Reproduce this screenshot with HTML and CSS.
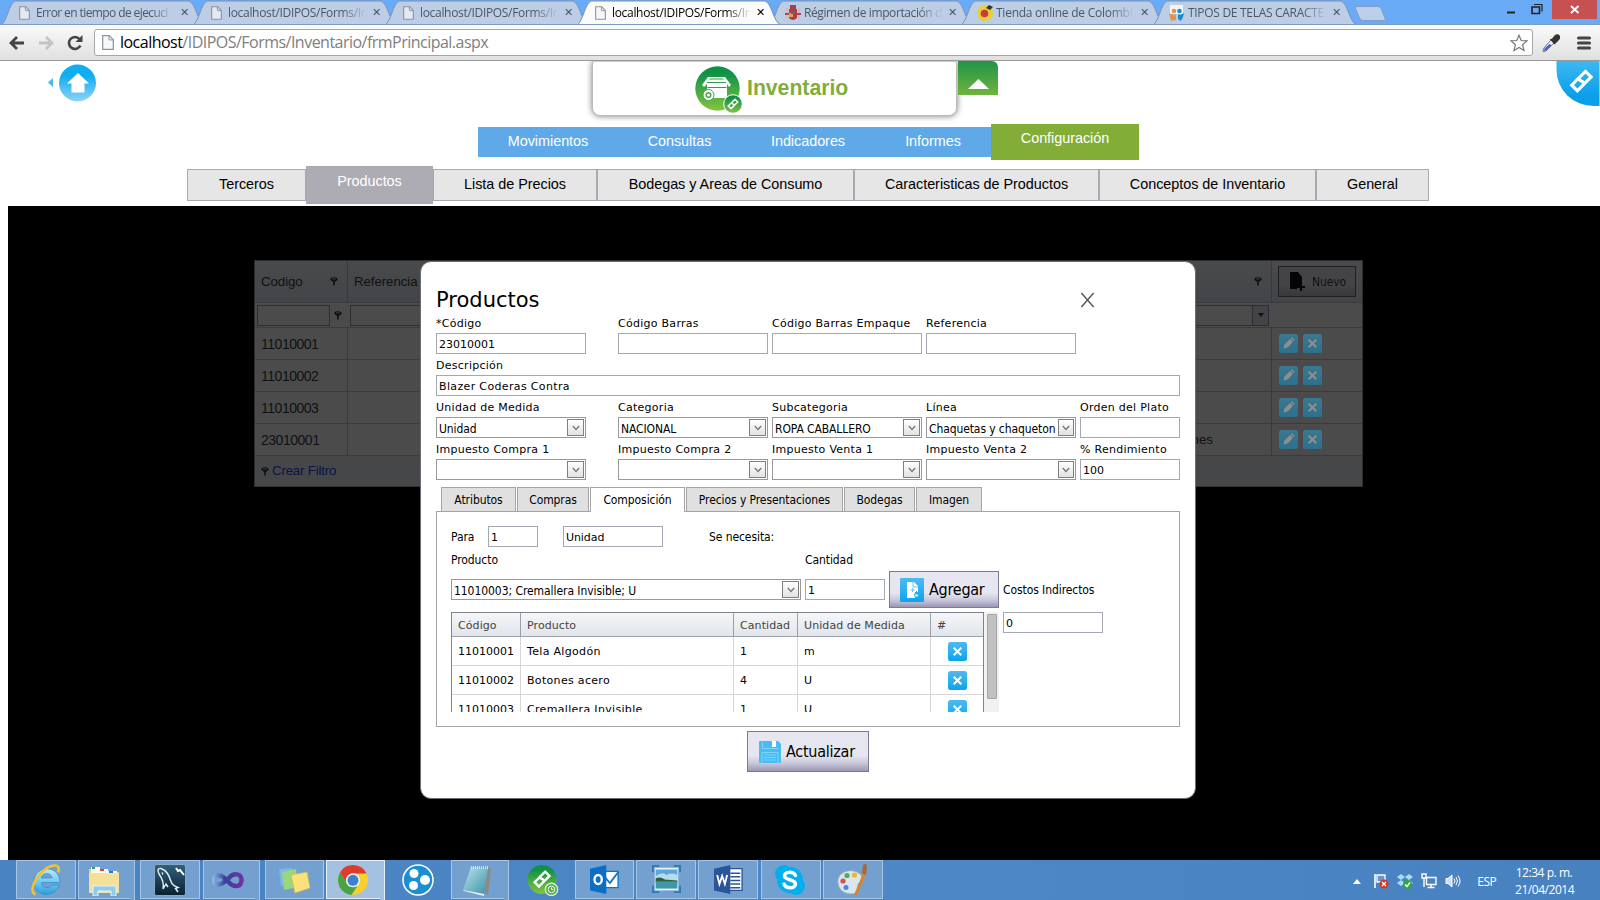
FILE: index.html
```html
<!DOCTYPE html>
<html lang="es">
<head>
<meta charset="utf-8">
<title>Inventario</title>
<link rel="stylesheet" href="styles.css">
</head>
<body>
<svg class="defs" width="0" height="0">
  <defs>
    <linearGradient id="gBlue" x1="0" y1="0" x2="0" y2="1"><stop offset="0" stop-color="#4db9f2"/><stop offset=".5" stop-color="#2fb0f0"/><stop offset="1" stop-color="#0aa3ec"/></linearGradient>
    <linearGradient id="gHome" x1="0" y1="0" x2="0" y2="1"><stop offset=".3" stop-color="#10adf0"/><stop offset="1" stop-color="#8ed3f5"/></linearGradient>
    <linearGradient id="gGreen" x1="0" y1="0" x2="0" y2="1"><stop offset=".15" stop-color="#0e9246"/><stop offset="1" stop-color="#84c440"/></linearGradient>
    <linearGradient id="gCorner" x1="0" y1="0" x2="0" y2="1"><stop offset="0" stop-color="#3cb8f2"/><stop offset=".8" stop-color="#0a9fe9"/></linearGradient>
    <linearGradient id="gMysql" x1="0" y1="0" x2="0" y2="1"><stop offset="0" stop-color="#31617f"/><stop offset="1" stop-color="#0a2033"/></linearGradient>
    <linearGradient id="gPad" x1="0" y1="0" x2="1" y2="1"><stop offset="0" stop-color="#b9e3ea"/><stop offset="1" stop-color="#3d93a8"/></linearGradient>
    <linearGradient id="gVs" x1="0" y1="0" x2="1" y2="0"><stop offset="0" stop-color="#7fb4dc"/><stop offset=".4" stop-color="#3b3f9d"/><stop offset="1" stop-color="#6a35a0"/></linearGradient>
    <linearGradient id="gIe" x1="0" y1="0" x2="0" y2="1"><stop offset="0" stop-color="#bdeafc"/><stop offset=".5" stop-color="#6dcbf3"/><stop offset="1" stop-color="#2a9ede"/></linearGradient>
    <symbol id="page" viewBox="0 0 12 15"><path d="M.7.7h6.6l4 4v9.6H.7z" fill="#f3f5f8" fill-opacity=".7" stroke="#8d949e" stroke-width="1.2"/><path d="M7 .8v4.1h4.2" fill="none" stroke="#8d949e"/></symbol>
    <symbol id="pin" viewBox="0 0 8 9"><ellipse cx="4" cy="2.200" rx="3.600" ry="2" fill="#111113"/><path d="M1.500 3.300h5L4.800 5.300v3.200H3.200V5.300z" fill="#111113"/><path d="M2 1.900h4" stroke="#555" stroke-width=".7"/></symbol>
    <symbol id="del" viewBox="0 0 19 19"><rect width="19" height="19" rx="2.500" fill="url(#gBlue)"/><path d="M5.700 5.700l7.600 7.600M13.300 5.700l-7.600 7.600" stroke="#fff" stroke-width="2"/></symbol>
    <symbol id="edit" viewBox="0 0 19 19"><rect width="19" height="19" rx="2.500" fill="url(#gBlue)"/><path d="M4.500 14.500l1-4 5.500-5.500 3 3-5.500 5.500zM11.800 4.200l1-1 3 3-1 1z" fill="#fff"/></symbol>
    <symbol id="link" viewBox="0 0 24 24"><path d="M9.500 9L16 2.500 21.500 8 15 14.500 12 11.500M14.500 15L8 21.500 2.500 16 9 9.500l3 3" fill="none" stroke="#fff" stroke-width="3.100"/></symbol>
    <symbol id="chev" viewBox="0 0 8 6"><path d="M.8 1L4 4.500 7.200 1" fill="none" stroke="#777" stroke-width="1.300"/></symbol>
  </defs>
</svg>

<header class="browser">
  <div class="strip">
    <div class="tab"><svg class="tabshape" viewBox="0 0 204 25"><path d="M0 25C6 22 8 3 14 1H188C195 3 196 22 204 25"/></svg><svg class="fav"><use href="#page"/></svg><span class="fade t1">Error en tiempo de ejecuci</span><i class="x">✕</i></div>
    <div class="tab"><svg class="tabshape" viewBox="0 0 204 25"><path d="M0 25C6 22 8 3 14 1H188C195 3 196 22 204 25"/></svg><svg class="fav"><use href="#page"/></svg><span class="fade t2">localhost/IDIPOS/Forms/In</span><i class="x">✕</i></div>
    <div class="tab"><svg class="tabshape" viewBox="0 0 204 25"><path d="M0 25C6 22 8 3 14 1H188C195 3 196 22 204 25"/></svg><svg class="fav"><use href="#page"/></svg><span class="fade t2">localhost/IDIPOS/Forms/In</span><i class="x">✕</i></div>
    <div class="tab active"><svg class="tabshape" viewBox="0 0 204 25"><path d="M0 25C6 22 8 3 14 1H188C195 3 196 22 204 25"/></svg><svg class="fav"><use href="#page"/></svg><span class="fade t2">localhost/IDIPOS/Forms/In</span><i class="x">✕</i></div>
    <div class="tab"><svg class="tabshape" viewBox="0 0 204 25"><path d="M0 25C6 22 8 3 14 1H188C195 3 196 22 204 25"/></svg><svg class="fav wide" viewBox="0 0 16 16"><path d="M1 3h2v11H1zM13 3h2v11h-2z" fill="#d5b9bd"/><path d="M4 4h8v9q-4 4-8 0z" fill="#b43a44"/><path d="M4 8h4v4H4z" fill="#d8a94a"/><path d="M5 0h6v4H5z" fill="#a5404a"/><path d="M0 8h4v2H0zM12 8h4v2h-4z" fill="#b8404f"/><path d="M6 6h4v3H6z" fill="#6b5a8a"/></svg><span class="fade t5">Régimen de importación d</span><i class="x">✕</i></div>
    <div class="tab"><svg class="tabshape" viewBox="0 0 204 25"><path d="M0 25C6 22 8 3 14 1H188C195 3 196 22 204 25"/></svg><svg class="fav wide" viewBox="0 0 16 16"><circle cx="8" cy="8" r="8" fill="#e2d234"/><circle cx="7.500" cy="8.500" r="3.800" fill="#d33744"/><path d="M9 3l3-3 4 2-3 3z" fill="#333"/></svg><span class="fade t6">Tienda online de Colombi</span><i class="x">✕</i></div>
    <div class="tab"><svg class="tabshape" viewBox="0 0 204 25"><path d="M0 25C6 22 8 3 14 1H188C195 3 196 22 204 25"/></svg><svg class="fav wide" viewBox="0 0 16 16"><path d="M1 0h13v9H1z" fill="#f2f5f8"/><circle cx="5" cy="6" r="2.300" fill="#e0954a"/><circle cx="10.500" cy="6" r="2.300" fill="#1c8cc9"/><path d="M0 8l5 2 2-1v6l-5 1-1-4z" fill="#e0954a"/><path d="M15 8l-4 2-2-1v5l3 2 2-4z" fill="#1c8cc9"/></svg><span class="fade t7">TIPOS DE TELAS CARACTE</span><i class="x">✕</i></div>
    <svg class="newtab" viewBox="0 0 31 15"><path d="M.5 2.500Q0 .5 2 .5H23Q25 .5 26 2.500L30 12Q31 14.500 28.500 14.500H8Q5.500 14.500 4.500 12z" fill="#bccfe8" stroke="#7f9cc4"/></svg>
    <div class="wins">
      <svg class="win min" viewBox="0 0 12 12"><path d="M2 9.500h8" stroke="#222" stroke-width="2"/></svg>
      <svg class="win" viewBox="0 0 12 12"><path d="M1 4h7.500v6.500H1z" fill="none" stroke="#222" stroke-width="1.600"/><path d="M3 1.500h8v7" fill="none" stroke="#222" stroke-width="1.200"/></svg>
      <div class="winx"><svg width="10" height="9" viewBox="0 0 10 9"><path d="M1 1l7.500 7M8.500 1L1 8" stroke="#fff" stroke-width="1.800"/></svg></div>
    </div>
  </div>
  <div class="toolbar">
    <svg class="nav" viewBox="0 0 16 16"><path d="M15 8H2.500M8 2L2 8l6 6" fill="none" stroke="#444" stroke-width="2.800"/></svg>
    <svg class="nav" viewBox="0 0 16 16"><path d="M1 8h12.500M8 2l6 6-6 6" fill="none" stroke="#c4c4c4" stroke-width="2.800"/></svg>
    <svg class="nav" viewBox="0 0 16 16"><path d="M13.400 10.500A6 6 0 1 1 12.500 4" fill="none" stroke="#444" stroke-width="2.600"/><path d="M15.500 0v7h-7z" fill="#444"/></svg>
    <div class="url"><svg class="pg"><use href="#page"/></svg><span class="addr"><b>localhost</b>/IDIPOS/Forms/Inventario/frmPrincipal.aspx</span><svg class="star" viewBox="0 0 18 18"><path d="M9 1.200l2.200 5.300 5.800.4-4.400 3.800 1.400 5.800L9 13.500l-5 3 1.400-5.800L1 6.900l5.800-.4z" fill="#fff" stroke="#777" stroke-width="1.200"/></svg></div>
    <svg class="drop" viewBox="0 0 18 18"><path d="M9 6l3 3-8 8-3 .5.500-3z" fill="#eef" stroke="#777"/><path d="M7.500 10l2 1-5.500 5.500-2 .3.300-2z" fill="#3d5bd0"/><path d="M8.500 5l4.500 5M10 6l3-4q2.500-2 4 0t-1 4l-3 3z" fill="#333" stroke="#333" stroke-width="1.500"/></svg>
    <svg class="burger" viewBox="0 0 14 14"><path d="M1.500 2h11M1.500 7h11M1.500 12h11" stroke="#444" stroke-width="3" stroke-linecap="round"/></svg>
  </div>
</header>

<main class="page">
  <div class="top">
    <svg class="home" viewBox="0 0 50 38"><path d="M6 14v9l-5-4.500z" fill="#4bb9ee"/><circle cx="30.500" cy="19" r="18.500" fill="url(#gHome)"/><path d="M31 9l11 10.500h-4.500v9h-13v-9H20z" fill="#fff"/></svg>
    <div class="brand">
      <svg class="brandicon" viewBox="0 0 48 48"><circle cx="22.500" cy="22.500" r="22.200" fill="url(#gGreen)"/><path d="M13 11h17l6 8-2 2-2-3v14H12V18l-3 3-2-2z" fill="#fff"/><path d="M14.500 13h14M12 16.500h19M12.500 21.500h19" stroke="#2d9d47" stroke-width="1.200"/><circle cx="13.500" cy="29" r="5.500" fill="#fff" stroke="#46a845"/><circle cx="13.500" cy="29" r="2.300" fill="none" stroke="#46a845" stroke-width="1.500"/><circle cx="38" cy="38" r="9.300" fill="url(#gGreen)" stroke="#fff"/><use href="#link" x="32" y="32" width="12" height="12"/></svg>
      <span>Inventario</span>
    </div>
    <div class="fold"><svg width="21" height="10" viewBox="0 0 21 10"><path d="M10.500 0L21 10H0z" fill="#fff"/></svg></div>
    <svg class="corner" viewBox="0 0 44 46"><path d="M0 0H44V46H38A38 37 0 0 1 0 9z" fill="url(#gCorner)"/><use href="#link" x="13" y="8" width="25" height="25"/></svg>
  </div>
  <nav class="menu">
    <a class="m1">Movimientos</a><a class="m2">Consultas</a><a class="m3">Indicadores</a><a class="m4">Informes</a><a class="m5 on">Configuración</a>
  </nav>
  <nav class="submenu">
    <a class="s1">Terceros</a><a class="s2 on">Productos</a><a class="s3">Lista de Precios</a><a class="s4">Bodegas y Areas de Consumo</a><a class="s5">Caracteristicas de Productos</a><a class="s6">Conceptos de Inventario</a><a class="s7">General</a>
  </nav>

  <section class="stage">
    <div class="grid">
      <div class="gr head"><div class="c1"><span>Codigo</span><svg class="pin"><use href="#pin"/></svg></div><div class="c2"><span>Referencia</span><svg class="pin far"><use href="#pin"/></svg></div><div class="c3"><div class="nuevo"><svg width="16" height="20" viewBox="0 0 16 20"><path d="M1 0h8l4 5v6h-2v3H8v3H1z" fill="#050505"/><path d="M12 11v8M8 15h8" stroke="#050505" stroke-width="2.200"/></svg>Nuevo</div></div></div>
      <div class="gr filt"><div class="c1"><i class="fi"></i><svg class="pin"><use href="#pin"/></svg></div><div class="c2"><i class="combo"><b></b></i></div><div class="c3"></div></div>
      <div class="gr row"><div class="c1">11010001</div><div class="c2"></div><div class="c3"><svg><use href="#edit"/></svg><svg><use href="#del"/></svg></div></div>
      <div class="gr row"><div class="c1">11010002</div><div class="c2"></div><div class="c3"><svg><use href="#edit"/></svg><svg><use href="#del"/></svg></div></div>
      <div class="gr row"><div class="c1">11010003</div><div class="c2"></div><div class="c3"><svg><use href="#edit"/></svg><svg><use href="#del"/></svg></div></div>
      <div class="gr row"><div class="c1">23010001</div><div class="c2"><span class="nes">nes</span></div><div class="c3"><svg><use href="#edit"/></svg><svg><use href="#del"/></svg></div></div>
      <div class="foot"><svg class="pin"><use href="#pin"/></svg><span>Crear Filtro</span></div>
    </div>

    <div class="modal">
      <div class="mhead"><h1>Productos</h1><svg class="close" viewBox="0 0 16 16"><path d="M1.500.5L14.500 15.500M14.500.5L1.500 15.500" stroke="#555" stroke-width="1.500"/></svg></div>
      <div class="form">
        <label class="a">*Código<span class="in num">23010001</span></label><label class="b">Código Barras<span class="in"></span></label><label class="c">Código Barras Empaque<span class="in"></span></label><label class="d">Referencia<span class="in"></span></label>
        <label class="all">Descripción<span class="in">Blazer Coderas Contra</span></label>
        <label class="a">Unidad de Medida<span class="in sel">Unidad<i><svg><use href="#chev"/></svg></i></span></label><label class="b">Categoria<span class="in sel">NACIONAL<i><svg><use href="#chev"/></svg></i></span></label><label class="c">Subcategoria<span class="in sel">ROPA CABALLERO<i><svg><use href="#chev"/></svg></i></span></label><label class="d">Línea<span class="in sel">Chaquetas y chaqueton<i><svg><use href="#chev"/></svg></i></span></label><label class="e">Orden del Plato<span class="in"></span></label>
        <label class="a">Impuesto Compra 1<span class="in sel"><i><svg><use href="#chev"/></svg></i></span></label><label class="b">Impuesto Compra 2<span class="in sel"><i><svg><use href="#chev"/></svg></i></span></label><label class="c">Impuesto Venta 1<span class="in sel"><i><svg><use href="#chev"/></svg></i></span></label><label class="d">Impuesto Venta 2<span class="in sel"><i><svg><use href="#chev"/></svg></i></span></label><label class="e">% Rendimiento<span class="in num">100</span></label>
      </div>
      <div class="tabs"><a class="p1">Atributos</a><a class="p2">Compras</a><a class="p3 on">Composición</a><a class="p4">Precios y Presentaciones</a><a class="p5">Bodegas</a><a class="p6">Imagen</a></div>
      <div class="panel">
        <div class="line1"><span class="para">Para</span><span class="in w50">1</span><span class="in w100">Unidad</span><span>Se necesita:</span></div>
        <div class="line2"><span class="lp">Producto</span><span>Cantidad</span></div>
        <div class="line3"><span class="in sel w350">11010003; Cremallera Invisible; U<i><svg><use href="#chev"/></svg></i></span><span class="in w80">1</span><button class="btn add"><svg width="24" height="24" viewBox="0 0 24 24"><rect width="24" height="24" rx="1" fill="url(#gBlue)"/><path d="M7 4h7l4 4v6h-3v6H7z" fill="#fff"/><path d="M13 4v5h5M10.500 12h4M12.500 10v4" stroke="#6cc5f2" fill="none"/><path d="M16.500 13v3h2l-.5 3h-3l-.5-3h2" stroke="#27abec" fill="#fff"/></svg>Agregar</button><span>Costos Indirectos</span></div>
        <div class="line4">
          <div class="scroller">
            <div class="table">
              <div class="tr th"><span>Código</span><span>Producto</span><span>Cantidad</span><span>Unidad de Medida</span><span>#</span></div>
              <div class="tr"><span class="num">11010001</span><span>Tela Algodón</span><span>1</span><span>m</span><span class="ic"><svg><use href="#del"/></svg></span></div>
              <div class="tr"><span class="num">11010002</span><span>Botones acero</span><span>4</span><span>U</span><span class="ic"><svg><use href="#del"/></svg></span></div>
              <div class="tr"><span class="num">11010003</span><span>Cremallera Invisible</span><span>1</span><span>U</span><span class="ic"><svg><use href="#del"/></svg></span></div>
            </div>
            <div class="track"><div class="thumb"></div></div>
          </div>
          <span class="in w100">0</span>
        </div>
      </div>
      <button class="btn save"><svg width="22" height="22" viewBox="0 0 22 22"><path d="M0 1q0-1 1-1h18l3 3v18q0 1-1 1H1q-1 0-1-1z" fill="#49bcf3"/><path d="M13 0h4v6h-4z" fill="#fff"/><path d="M3.500 1v6.500H19M3 22V11.500h16V22M5 14h12M5 16.500h12M5 19h12" fill="none" stroke="#7fd2f8"/></svg>Actualizar</button>
    </div>
  </section>
</main>

<footer class="taskbar">
  <div class="tk t-ie box"><svg viewBox="0 0 32 32"><path fill-rule="evenodd" d="M30 18.500H11.500c.5 6 8.500 6.500 10.500 2.500h7.500C24 35 4 33 4 17.500 4 1 30 0 30 18.500zM11.500 14H22c-.5-6-10-6-10.500 0z" fill="url(#gIe)" stroke="#2b86c0" stroke-width=".6"/><path d="M5.500 30.500C-4 27 11 1 25.500 1.500q5 .5 2.500 7" fill="none" stroke="#f3c32c" stroke-width="2.600"/></svg></div>
  <div class="tk t-ex box stack"><svg viewBox="0 0 32 32"><path d="M1 5h10l2 3h18v21H1z" fill="#e8cf7d"/><path d="M3 3h9v6H3zM11 5h9v5h-9zM20 7h9v4h-9z" fill="#fbfbf3"/><path d="M4 3h3v2H4z" fill="#3a4"/><path d="M12 5h4v2h-4z" fill="#d43"/><path d="M21 7h4v2h-4z" fill="#27c"/><path d="M1 9h30v20H1z" fill="#f5e09a"/><path d="M5 32V22h23v10h-5v-5H10v5z" fill="#8fcbec" stroke="#dff3ff"/></svg></div>
  <div class="tk t-my box"><svg viewBox="0 0 32 32"><rect x=".5" y=".5" width="31" height="31" rx="2" fill="url(#gMysql)" stroke="#8aa9c0"/><path d="M9 25c1-5-1-11-4-15C3 6 4 4 7 4.500c6 2 8 7 10 13 1 3 4 5 7 6l-2.500 1L24 28M9 25l3-5 2 3M8 8.500l1 2" fill="none" stroke="#e8f0f6" stroke-width="1.400"/><path d="M22 4l2 3 2-1 4 5" stroke="#fff" fill="none" stroke-width="2"/></svg></div>
  <div class="tk t-vs box stack"><svg viewBox="0 0 32 32"><path d="M15 17C12 12.500 9 11.500 6 11.500a4.500 4.500 0 0 0 0 9c5 0 9-4.500 12-7.500 3-4 11.500-4 11.500 3s-7.500 8.500-14 1" fill="none" stroke="url(#gVs)" stroke-width="4.500"/></svg></div>
  <div class="tk t-st box"><svg viewBox="0 0 32 32"><path d="M1 5l13-1 2 17-13 1z" fill="#77b9e8"/><path d="M4 8l14-3 2 18-14 3z" fill="#9bd67a"/><path d="M13 11l16-3 3 16-15 5q-2-9-4-18z" fill="#f7e27c" stroke="#d6b84c" stroke-width=".7"/></svg></div>
  <div class="tk t-ch box stack lit"><svg viewBox="0 0 32 32"><circle cx="16" cy="16" r="15" fill="#f7cf2e"/><path d="M3 8.500A15 15 0 0 1 29.500 9.500H16A7 7 0 0 0 9.500 19z" fill="#dc3b2f"/><path d="M3 8.500A15 15 0 0 0 14.500 31L22 19.500A7 7 0 0 1 9.500 19z" fill="#46a547"/><circle cx="16" cy="16.300" r="7" fill="#f2f2f2"/><circle cx="16" cy="16.300" r="5.500" fill="#3b80d1"/></svg></div>
  <div class="tk t-ha"><svg viewBox="0 0 32 32"><circle cx="16" cy="16" r="15" fill="#1b8fd2" stroke="#fff" stroke-width="1.500"/><g fill="#fff"><circle cx="12" cy="9.500" r="4.500"/><circle cx="11.500" cy="21.500" r="4.500"/><circle cx="23" cy="16" r="5"/></g></svg></div>
  <div class="tk t-no box stack"><svg viewBox="0 0 32 32"><path d="M10 3l20 1-3 27-3-2z" fill="#8d8a83"/><path d="M10 3l17 1-4 26-21-4z" fill="url(#gPad)"/><path d="M2 26l21 4v2L3 27z" fill="#eee"/><path d="M10 3.500h18" stroke="#ddd" stroke-width="3" stroke-dasharray="1 1"/></svg></div>
  <div class="tk t-li"><svg viewBox="0 0 34 34"><circle cx="16" cy="16.500" r="15.500" fill="url(#gGreen)"/><use href="#link" x="6" y="6" width="20" height="20"/><circle cx="26" cy="27" r="6.500" fill="#4fae45" stroke="#d9f0c8" stroke-width="1.500"/><circle cx="26" cy="27" r="3.500" fill="none" stroke="#fff"/><path d="M26 25v2h2" fill="none" stroke="#fff"/></svg></div>
  <div class="tk t-ou box"><svg viewBox="0 0 32 32"><path d="M14 7h17v18H14z" fill="#fff" stroke="#0f74c8" stroke-width="1.500"/><path d="M16 13l6 7 9-12" fill="none" stroke="#0f74c8" stroke-width="2"/><path d="M0 4l18-4v32L0 28z" fill="#0a6fc5"/><ellipse cx="9" cy="16" rx="4" ry="5" fill="none" stroke="#fff" stroke-width="2.600"/></svg></div>
  <div class="tk t-pi box"><svg viewBox="0 0 32 32"><path d="M3 3h26v25H3z" fill="#eaf1f5"/><path d="M4 5h24v10H4z" fill="#5ba7dc"/><path d="M4 12q8-5 12-1 6-3 12 0v6H4z" fill="#b5dcee"/><path d="M4 15q5-3 10 1l14 1v2H4z" fill="#315d3b"/><path d="M4 18h24v8H4z" fill="#3e98a7"/><path d="M1 8V1h7M24 1h7v7M31 23v7h-7M8 30H1v-7" fill="none" stroke="#2c78bb" stroke-width="2"/></svg></div>
  <div class="tk t-wo box"><svg viewBox="0 0 32 32"><path d="M14 4h17v24H14z" fill="#fff" stroke="#2a5699" stroke-width="1.500"/><path d="M18 9h11M18 13h11M18 17h11M18 21h11M18 25h11" stroke="#2a5699" stroke-width="1.700"/><path d="M0 4l18-4v32L0 28z" fill="#2a5699"/><path d="M3.500 11l2.500 10 3-9 3 9 2.500-10" fill="none" stroke="#fff" stroke-width="2"/></svg></div>
  <div class="tk t-sk box"><svg viewBox="0 0 32 32"><circle cx="10" cy="10" r="9" fill="#00aff0"/><circle cx="22" cy="22" r="9" fill="#00aff0"/><circle cx="16" cy="16" r="13" fill="#00aff0"/><path d="M21.500 11.500C19 7 10.500 7.500 10.500 12s11 3 11 8-9.500 5-11.500 0" fill="none" stroke="#fff" stroke-width="3.500" stroke-linecap="round"/></svg></div>
  <div class="tk t-pa box"><svg viewBox="0 0 32 32"><path d="M2 20C0 9 12 4 21 8c8 4 5 9 2 11s2 7-3 10C13 32 3 28 2 20z" fill="#d7e6ef" stroke="#90abc0"/><circle cx="7" cy="17" r="2.600" fill="#dc5145"/><circle cx="11" cy="11.500" r="2.600" fill="#55b04b"/><circle cx="18.500" cy="11" r="2.600" fill="#f1b52d"/><circle cx="10" cy="23.500" r="2.500" fill="#4d87d6"/><path d="M18 31L27 9l3 1-9 21z" fill="#d9832d"/><path d="M26 9l1-8q4-3 4 2l-1 8z" fill="#a66a3a"/></svg></div>
  <div class="tray">
    <svg width="8" height="5" viewBox="0 0 8 5"><path d="M4 0l4 5H0z" fill="#fff"/></svg>
    <svg width="16" height="16" viewBox="0 0 16 16"><path d="M2 1v14" stroke="#fff" stroke-width="1.600"/><path d="M4 2h8v7H4z" fill="#6b95c4" stroke="#fff" stroke-width="1.300"/><circle cx="11" cy="11" r="4.500" fill="#d6352b"/><path d="M9 9l4 4M13 9l-4 4" stroke="#fff" stroke-width="1.300"/></svg>
    <svg width="16" height="16" viewBox="0 0 16 16"><path d="M4 1l4 3-4 3-4-3zM12 1l4 3-4 3-4-3zM4 7l4 3-4 3-4-3zM12 7l4 3-4 3-4-3z" fill="#a9dbfa"/><circle cx="10.500" cy="11.500" r="4.500" fill="#2fa33c"/><path d="M8 11.500l2 2 3-4" fill="none" stroke="#fff" stroke-width="1.500"/></svg>
    <svg width="16" height="16" viewBox="0 0 16 16"><path d="M5.500 4.500h9.500v7H5.500zM10 12v2.500M6.500 14.500h7M1 1h4v4H1zM3 5v9" fill="none" stroke="#fff" stroke-width="1.400"/></svg>
    <svg width="16" height="16" viewBox="0 0 16 16"><path d="M1 5.500h2L7 2v12l-4-3.500H1z" fill="#cfdded" stroke="#fff"/><path d="M9 5.500q2 2.500 0 5M11 4q3 4 0 8M13 2.500q4 5.500 0 11" fill="none" stroke="#fff"/></svg>
    <span class="esp">ESP</span>
    <span class="clock">12:34 p. m.<br>21/04/2014</span>
  </div>
</footer>
</body>
</html>
```
FILE: styles.css
```css
* { box-sizing: border-box; }
body { margin: 0; width: 1600px; height: 900px; overflow: hidden; background: #fff; font-family: "DejaVu Sans Condensed", "DejaVu Sans", sans-serif; font-size: 12px; color: #000; }
svg { display: block; flex: none; }
i, b { font-style: normal; font-weight: normal; }
.defs { position: absolute; }

/* browser frame */
.strip { display: flex; height: 25px; background: #6aabf7; border-bottom: 1px solid #7d9cc5; font: 12px "Open Sans", "Noto Sans", sans-serif; color: #4d5665; overflow: hidden; padding-left: 1px; }
.tab { position: relative; width: 192px; height: 25px; display: flex; align-items: center; padding-left: 18px; flex: none; }
.tabshape { position: absolute; left: 0; top: 0; width: 204px; height: 25px; }
.tabshape path { fill: #bccee6; stroke: #7b90b0; }
.tab > :not(.tabshape) { position: relative; z-index: 3; }
.active { z-index: 2; color: #000; }
.active .tabshape path { fill: #fbfbfb; }
.fav { width: 11px; height: 14px; margin-right: 6px; }
.fav.wide { width: 16px; height: 16px; margin: 0 3px 0 -2px; }
.fade { width: 139px; white-space: nowrap; overflow: hidden; -webkit-mask-image: linear-gradient(90deg, #000 82%, transparent 100%); mask-image: linear-gradient(90deg, #000 82%, transparent 100%); }
.t1 { letter-spacing: -.6px; }
.t2 { letter-spacing: -.32px; }
.t5 { letter-spacing: -.4px; }
.t6 { letter-spacing: -.25px; }
.t7 { letter-spacing: -.3px; }
.x { font: bold 11px "DejaVu Sans", sans-serif; width: 12px; margin-left: 5px; }
.newtab { width: 31px; height: 15px; margin: 6px 0 0 10px; }
.wins { margin-left: auto; display: flex; height: 19px; }
.win { width: 12px; height: 12px; margin: 3px 9px 0 0; }
.min { margin-right: 14px; }
.winx { background: #c75050; width: 45px; height: 19px; margin-right: 3px; display: flex; align-items: center; justify-content: center; }
.toolbar { height: 36px; background: linear-gradient(#fafafa, #e0e0e0); border-bottom: 1px solid #9a9a9a; display: flex; align-items: center; padding-left: 9px; }
.nav { width: 16px; height: 16px; margin-right: 13px; }
.nav + .nav + .nav { margin-right: 11px; }
.url { width: 1439px; height: 27px; border: 1px solid #a6a6a6; border-radius: 3px; background: #fff; display: flex; align-items: center; padding-left: 7px; }
.pg { width: 12px; height: 15px; }
.addr { font: 16px/24px "Open Sans", sans-serif; color: #808080; margin: -1px 0 0 6px; letter-spacing: -.52px; }
.addr b { color: #000; }
.star { width: 18px; height: 18px; margin-left: auto; margin-right: 4px; }
.drop { width: 18px; height: 18px; margin-left: 9px; }
.burger { width: 14px; height: 14px; margin-left: 17px; }

/* page header */
.page { height: 799px; }
.top { display: flex; height: 63px; align-items: flex-start; overflow: hidden; }
.home { width: 50px; height: 38px; margin: 3px 0 0 47px; }
.brand { width: 365px; height: 55px; margin-left: 495px; border: 1px solid #bbb; border-top-color: #ccc; border-radius: 3px 3px 8px 8px; box-shadow: 0 0 6px #777; background: #fff; display: flex; align-items: center; padding-left: 102px; font: bold 21.200px "Liberation Sans", Arial, sans-serif; color: #82ad3a; }
.brand span { margin-top: -2px; }
.brandicon { width: 48px; height: 48px; margin: 3px 4px 0 0; }
.fold { width: 40px; height: 34px; margin-left: 1px; border-radius: 0 6px 0 0; background: linear-gradient(#209449, #70b33f); display: flex; justify-content: center; align-items: flex-end; padding-bottom: 6px; }
.corner { width: 44px; height: 45px; margin-left: auto; }
.menu, .submenu { display: flex; font: 14.400px "Liberation Sans", Arial, sans-serif; letter-spacing: -.03px; }
.menu a, .submenu a { text-align: center; white-space: nowrap; }
.menu { height: 36px; padding-left: 478px; color: #fff; }
.menu a { margin-top: 3px; height: 30px; line-height: 28px; background: #60a9e9; }
.menu .on { margin-top: 0; height: 36px; background: #82ae38; }
.m1 { width: 140px; } .m2 { width: 123px; } .m3 { width: 134px; } .m4 { width: 116px; } .m5 { width: 148px; }
.submenu { height: 46px; padding: 6px 0 0 187px; }
.submenu a { margin-top: 3px; height: 32px; line-height: 28px; background: #e6e6e6; border: 1px solid #a9a9b2; }
.submenu .on { margin-top: 0; height: 38px; background: #adacb4; color: #fff; }
.s1 { width: 119px; } .s2 { width: 127px; } .s3 { width: 164px; } .s4 { width: 257px; } .s5 { width: 245px; } .s6 { width: 217px; } .s7 { width: 113px; }

/* dimmed grid */
.stage { position: relative; height: 654px; margin-left: 8px; background: #000; padding: 54px 0 0 246px; }
.grid { width: 1109px; border: 1px solid #2e2e30; font: 13.300px "Liberation Sans", Arial, sans-serif; color: #111; background: #4b4b4b; }
.gr { display: flex; border-bottom: 1px solid #3b3b3e; }
.gr > div { display: flex; align-items: center; }
.c1 { width: 93px; border-right: 1px solid #3a3a3e; padding-left: 6px; }
.c2 { width: 924px; border-right: 1px solid #3a3a3e; padding-left: 6px; }
.c3 { width: 90px; padding-left: 6px; }
.head { height: 42px; background: linear-gradient(#484a4b, #434448); letter-spacing: -.08px; }
.pin { width: 8px; height: 9px; margin-left: auto; margin-right: 9px; }
.nuevo { width: 78px; height: 31px; border: 1px solid #202024; display: flex; align-items: center; font: 12px "DejaVu Sans Condensed", sans-serif; letter-spacing: -.1px; gap: 7px; padding-left: 10px; background: linear-gradient(#444447 60%, #39393d); }
.filt { height: 25px; }
.filt .c1, .filt .c2, .filt .c3 { border-right: 0; }
.filt .c1, .filt .c2 { padding-left: 2px; }
.fi { width: 73px; height: 21px; border: 1px solid #2e2e32; }
.filt .pin { margin: 0 0 0 4px; }
.combo { width: 919px; height: 21px; border: 1px solid #2e2e32; display: flex; justify-content: flex-end; }
.combo b { width: 16px; border-left: 1px solid #2e2e32; background: #434448; display: flex; align-items: center; justify-content: center; }
.combo b::after { content: ""; border: 3px solid transparent; border-top: 4px solid #111; border-bottom: 0; }
.row { height: 32px; }
.row .c1 { letter-spacing: -.48px; font-size: 14px; }
.row .c3 { padding-left: 7px; }
.row .c3 svg { width: 19px; height: 19px; margin-right: 5px; opacity: .38; }
.row .c3 use { filter: saturate(1.4); }
.nes { margin-left: auto; margin-right: 58px; }
.foot { height: 30px; background: #464749; display: flex; align-items: center; color: #0a1445; padding-bottom: 2px; letter-spacing: -.2px; }
.foot .pin { margin: 2px 3px 0 6px; }

/* product dialog */
.modal { position: absolute; left: 412px; top: 55px; width: 776px; height: 538px; border: 1px solid #6d6d75; border-radius: 11px; background: #fff; padding: 22px 15px 0 15px; }
.mhead { height: 28px; display: flex; justify-content: space-between; }
.mhead h1 { margin: 2px 0 0; font: 21px/28px "DejaVu Sans", sans-serif; }
.close { width: 15px; height: 16px; margin: 8px 85px 0 0; }
.form { display: grid; grid-template-columns: 150px 32px 150px 4px 150px 4px 150px 4px 100px; grid-auto-rows: 42px; width: 744px; font: 11px/24px "DejaVu Sans", sans-serif; letter-spacing: .27px; }
.form label { display: flex; flex-direction: column; white-space: nowrap; }
.a { grid-column: 1; } .b { grid-column: 3; } .c { grid-column: 5; } .d { grid-column: 7; } .e { grid-column: 9; } .all { grid-column: 1 / 10; }
.in { display: flex; height: 21px; border: 1px solid #a3a8b3; padding-left: 2px; font: 11px/21px "DejaVu Sans", sans-serif; white-space: nowrap; background: #fff; flex: none; }
.form .in { margin-top: -3px; }
.all .in { letter-spacing: .35px; }
.num { letter-spacing: 0; }
.sel { border-color: #999; font: 12px/22px "DejaVu Sans Condensed", sans-serif; padding-left: 2px; overflow: hidden; letter-spacing: -.1px; }
.sel i { margin: 1px 1px 0 auto; width: 17px; height: 17px; border: 1px solid #808080; background: linear-gradient(#fff, #e2e2e2); display: flex; align-items: center; justify-content: center; flex: none; }
.form .d .sel i { width: 16px; }
.sel i svg { width: 8px; height: 6px; }
.tabs { display: flex; gap: 1px; padding-left: 5px; margin-top: 7px; height: 24px; position: relative; z-index: 1; }
.tabs a { height: 24px; line-height: 24px; text-align: center; border: 1px solid #a5a5a5; border-bottom: 0; background: #e0e0e0; white-space: nowrap; }
.tabs .on { background: #fff; height: 25px; }
.tabs a, .panel { font-size: 12px; letter-spacing: -.08px; }
.p1 { width: 75px; } .p2 { width: 72px; } .p3 { width: 95px; } .p4 { width: 157px; } .p5 { width: 71px; } .p6 { width: 66px; }
.panel { width: 744px; height: 216px; border: 1px solid #a5a5a5; padding: 14px 0 0 14px; }
.line1 { display: flex; height: 21px; line-height: 22px; }
.para { width: 37px; }
.w50 { width: 50px; margin-right: 25px; } .w80 { width: 80px; } .w100 { width: 100px; } .w350 { width: 350px; }
.line1 .w100 { margin-right: 46px; }
.line2 { display: flex; height: 24px; line-height: 26px; }
.lp { width: 354px; }
.line3 { display: flex; align-items: center; gap: 4px; height: 37px; }
.w350 { letter-spacing: -.06px; }
.btn { display: flex; align-items: center; border: 1px solid #7b7994; background: linear-gradient(#e6e6f0 60%, #c9c8da 80%, #9a97b4); font: 16px "DejaVu Sans Condensed", sans-serif; letter-spacing: -.25px; color: #000; padding: 0 0 0 11px; gap: 5px; }
.add { width: 110px; height: 37px; padding-left: 10px; }
.save { width: 122px; height: 41px; margin: 4px 0 0 311px; }
.line4 { display: flex; gap: 4px; margin-top: 4px; }
.scroller { display: flex; width: 548px; height: 100px; overflow: hidden; }
.table { width: 533px; border: 1px solid #7e828b; font: 11px "DejaVu Sans", sans-serif; letter-spacing: .32px; height: 130px; flex: none; }
.tr { display: grid; grid-template-columns: 69px 213px 64px 133px 52px; height: 29px; border-bottom: 1px solid #d5d7db; }
.tr span { padding-left: 6px; line-height: 29px; border-right: 1px solid #d5d7db; white-space: nowrap; }
.tr .num { letter-spacing: 0; }
.tr span:last-child { border-right: 0; }
.th { height: 24px; background: linear-gradient(#f5f6f8, #e1e5eb); border-color: #9ba1ab; color: #444; letter-spacing: .08px; }
.th span { line-height: 25px; border-color: #9ba1ab; }
.ic svg { width: 19px; height: 19px; margin: 5px 0 0 11px; }
.track { width: 15px; background: #f1f1f1; padding: 2px 2px 0 3px; }
.thumb { width: 10px; height: 85px; background: #c1c1c1; border: 1px solid #a5a5a5; border-radius: 1px; }

/* taskbar */
.taskbar { display: flex; height: 40px; background: linear-gradient(90deg, #4a83c2, #4d87c5 60%, #4881c0); padding-left: 16px; }
.tk { height: 39px; display: flex; align-items: center; justify-content: center; margin-right: 2px; flex: none; position: relative; }
.tk svg { width: 32px; height: 32px; }
.box { border: 1px solid #a8c4e3; background: #74a0d0; }
.stack { margin-right: 7px; }
.stack::after { content: ""; position: absolute; right: -5px; top: -1px; width: 4px; height: 39px; border: 1px solid #a8c4e3; border-left: 0; background: #74a0d0; }
.lit { background: #a4c1e2; border-color: #e5effa; }
.lit::after { border-color: #e5effa; background: #a4c1e2; }
.t-ie { width: 60px; } .t-ex { width: 53px; margin-right: 9px; } .t-my { width: 60px; margin-right: 3px; } .t-vs { width: 53px; margin-right: 9px; } .t-st { width: 59px; } .t-ch { width: 55px; margin-right: 6px; } .t-ha { width: 62px; } .t-no { width: 54px; } .t-li { width: 61px; } .t-ou { width: 59px; } .t-pi { width: 60px; } .t-wo { width: 60px; margin-right: 3px; } .t-sk { width: 60px; margin-right: 2px; } .t-pa { width: 60px; }
.t-pi svg, .t-ou svg, .t-wo svg { width: 29px; height: 29px; }
.t-vs svg { margin-right: 4px; }
.t-ex svg, .t-st svg, .t-ch svg, .t-no svg, .t-sk svg, .t-pa svg { margin-right: 2px; }
.tray { margin-left: auto; display: flex; align-items: center; gap: 8px; color: #fff; font: 12px/17px "Open Sans", sans-serif; padding: 2px 27px 0 0; letter-spacing: -.45px; }
.tray svg:first-child { margin-right: 4px; }
.esp { margin: 0 11px 0 8px; letter-spacing: -.6px; }
.clock { text-align: center; white-space: nowrap; width: 58px; }
```
